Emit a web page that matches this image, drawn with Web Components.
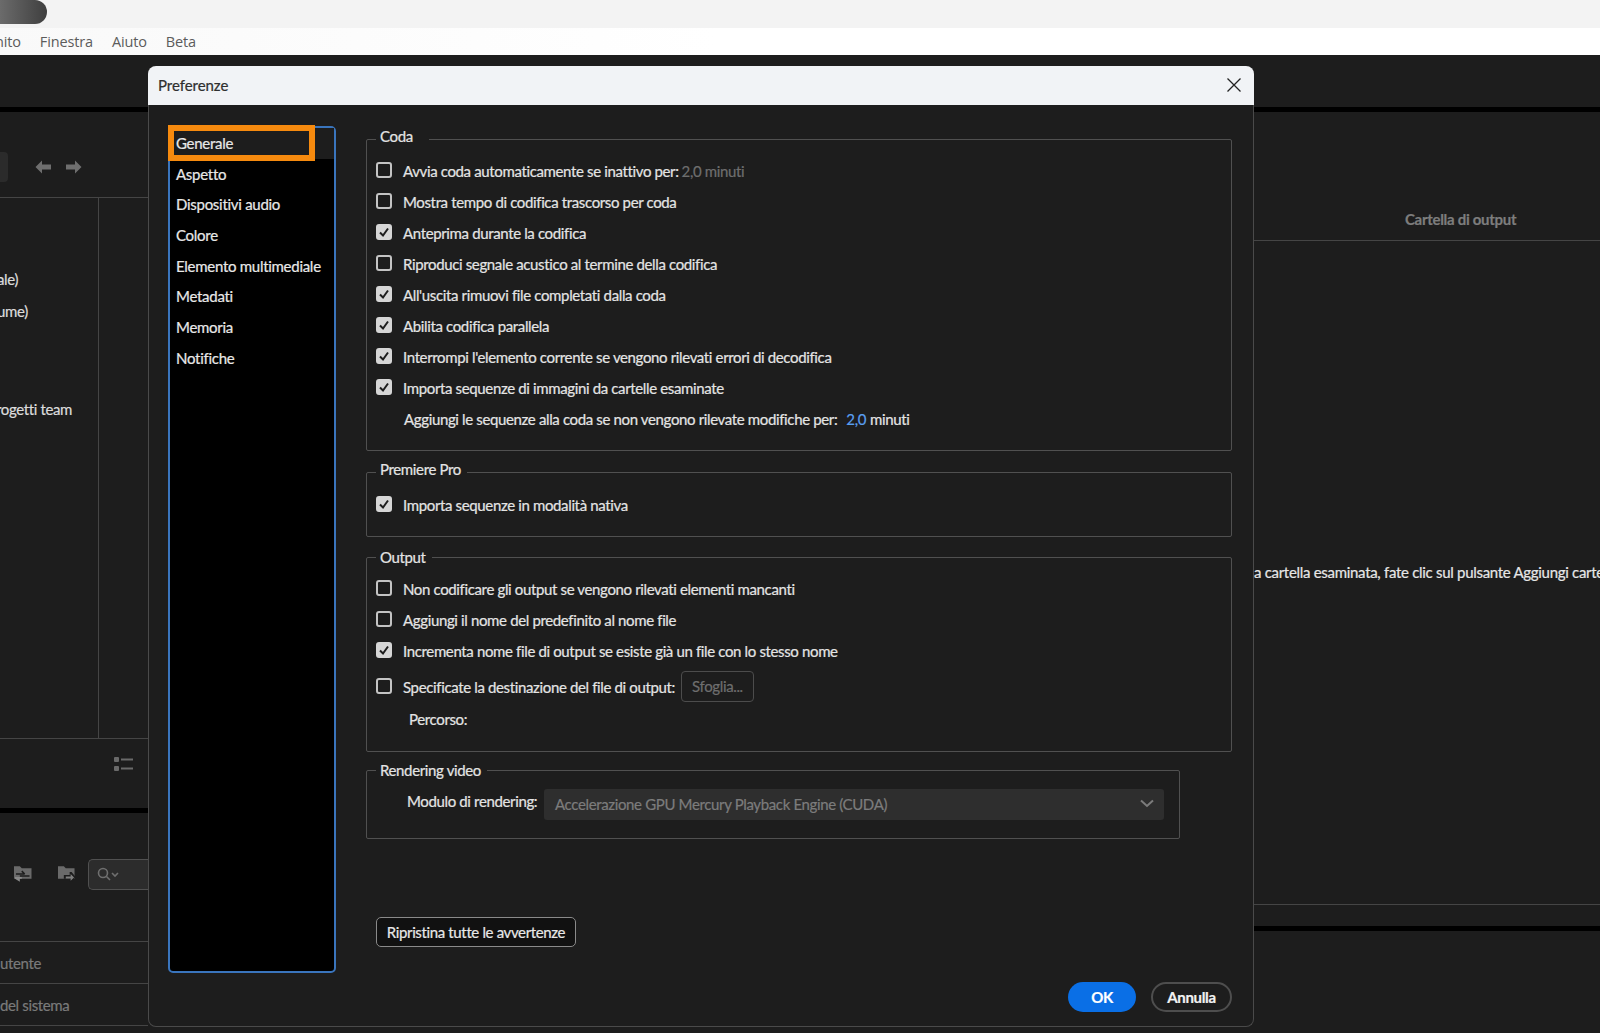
<!doctype html>
<html lang="it">
<head>
<meta charset="utf-8">
<title>Preferenze</title>
<style>
  html, body { margin: 0; height: 100%; background: #1d1d1d; overflow: hidden; }
  body { font-family: Lato, "Noto Sans", sans-serif; -webkit-text-stroke: .2px; }
</style>
</head>
<body>
<app-shell>
  <left-panel slot="left"></left-panel>
  <right-panel slot="right"></right-panel>
</app-shell>

<pref-dialog heading="Preferenze">
  <pref-nav slot="nav">
    <nav-item selected>Generale</nav-item>
    <nav-item>Aspetto</nav-item>
    <nav-item>Dispositivi audio</nav-item>
    <nav-item>Colore</nav-item>
    <nav-item>Elemento multimediale</nav-item>
    <nav-item>Metadati</nav-item>
    <nav-item>Memoria</nav-item>
    <nav-item>Notifiche</nav-item>
  </pref-nav>

  <group-box legend="Coda" style="--legend-gap: 16px; --legend-shift: -3px; --pad-bottom: 16px">
    <check-row>Avvia coda automaticamente se inattivo per:<span style="color:#6e6e6e; margin-left:3px">2,0 minuti</span></check-row>
    <check-row>Mostra tempo di codifica trascorso per coda</check-row>
    <check-row checked>Anteprima durante la codifica</check-row>
    <check-row>Riproduci segnale acustico al termine della codifica</check-row>
    <check-row checked>All'uscita rimuovi file completati dalla coda</check-row>
    <check-row checked>Abilita codifica parallela</check-row>
    <check-row checked>Interrompi l'elemento corrente se vengono rilevati errori di decodifica</check-row>
    <check-row checked>Importa sequenze di immagini da cartelle esaminate</check-row>
    <plain-row indent="37">Aggiungi le sequenze alla coda se non vengono rilevate modifiche per:<span style="color:#5a9ff0; margin:0 4px 0 9px">2,0</span>minuti</plain-row>
  </group-box>

  <group-box legend="Premiere Pro" style="--legend-gap: 6px; --legend-shift: -3px; margin-top: 11px; --pad-top: 7px; --pad-bottom: 16px">
    <check-row checked>Importa sequenze in modalità nativa</check-row>
  </group-box>

  <group-box legend="Output" style="--legend-gap: 6px; margin-top: 10px; --pad-bottom: 17px">
    <check-row>Non codificare gli output se vengono rilevati elementi mancanti</check-row>
    <check-row>Aggiungi il nome del predefinito al nome file</check-row>
    <check-row checked>Incrementa nome file di output se esiste già un file con lo stesso nome</check-row>
    <check-row tall>Specificate la destinazione del file di output:<dlg-button disabled style="margin-left:6px">Sfoglia...</dlg-button></check-row>
    <plain-row indent="42" style="height:27px; padding-bottom:2px">Percorso:</plain-row>
  </group-box>

  <group-box legend="Rendering video" style="--legend-gap: 6px; margin-top: 8px; width: 814px; --pad-top: 9px; --pad-bottom: 18px">
    <select-row label="Modulo di rendering:" value="Accelerazione GPU Mercury Playback Engine (CUDA)"></select-row>
  </group-box>

  <dlg-button slot="reset" dark>Ripristina tutte le avvertenze</dlg-button>

  <dlg-button slot="ok" primary>OK</dlg-button>
  <dlg-button slot="cancel" pill>Annulla</dlg-button>
</pref-dialog>

<script>
class AppShell extends HTMLElement {
  constructor() {
    super();
    this.attachShadow({ mode: "open" });
    this.shadowRoot.innerHTML = `
      <style>
        :host { display: flex; flex-direction: column; height: 1033px; overflow: hidden; }
        .title { flex: 0 0 28px; background: #f3f3f3; overflow: hidden; }
        .pill { width: 47px; height: 24px; border-radius: 0 12px 12px 0;
                background: linear-gradient(90deg, #6b6b6b, #3f3f3f); }
        .menu { flex: 0 0 27px; box-sizing: border-box; background: linear-gradient(90deg, #f9f9f9, #ffffff 45%);
                display: flex; align-items: center; gap: 19px; margin-left: -5px; padding-bottom: 1px;
                font: 14.5px "Open Sans", sans-serif; color: #5c5c5c; letter-spacing: -.15px; -webkit-text-stroke: 0; }
        .work { flex: 1; display: grid; grid-template-columns: 148px 1106px 1fr; min-height: 0; }
        .mid { background: #1d1d1d; }
      </style>
      <div class="title"><div class="pill"></div></div>
      <div class="menu"><span>nito</span><span>Finestra</span><span>Aiuto</span><span>Beta</span></div>
      <div class="work"><slot name="left"></slot><div class="mid"></div><slot name="right"></slot></div>
    `;
  }
}

class LeftPanel extends HTMLElement {
  constructor() {
    super();
    this.attachShadow({ mode: "open" });
    this.shadowRoot.innerHTML = `
      <style>
        :host { display: flex; flex-direction: column; height: 978px; overflow: hidden;
                background: #1d1d1d; color: #7a7a7a; font-size: 15px; letter-spacing: -.36px; }
        .strip { flex: 0 0 52px; }
        .band { flex: 0 0 5px; background: #000; }
        .tools { flex: 0 0 85px; display: flex; align-items: center; gap: 15px; padding-top: 25px; box-sizing: border-box; }
        .stub { width: 8px; height: 30px; background: #2b2b2b; border-radius: 0 4px 4px 0; margin-right: 12px; }
        .tree { flex: 0 0 540px; border-top: 1px solid #454545; display: grid; grid-template-columns: 99px 1fr; }
        .names { border-right: 1px solid #454545; color: #dcdcdc; overflow: hidden; white-space: nowrap; padding-top: 65px; }
        .names div { line-height: 32px; margin-left: -3px; }
        .names .team { margin: 66px 0 0 -4px; }
        .actions { flex: 0 0 70px; border-top: 1px solid #454545; box-sizing: border-box; display: flex;
                   justify-content: flex-end; padding: 18px 15px 0 0; }
        .finder { flex: 0 0 128px; display: flex; align-items: center; gap: 26px; padding: 0 0 6px 14px; box-sizing: border-box; }
        .search { width: 60px; height: 31px; flex: none; box-sizing: border-box; margin-left: -13px; border: 1px solid #505050;
                  border-right: 0; border-radius: 5px 0 0 5px; background: #2c2c2c; display: flex; align-items: center; padding-left: 8px; }
        .foot { flex: 0 0 42px; border-top: 1px solid #454545; box-sizing: border-box; display: flex; align-items: center;
                padding-top: 1px; white-space: nowrap; }
      </style>
      <div class="strip"></div>
      <div class="band"></div>
      <div class="tools">
        <div class="stub"></div>
        <svg width="16" height="14" viewBox="0 0 16 14" fill="#6e6e6e"><path d="M7 0.5 0.5 7 7 13.5V9.5H16V4.5H7Z"/></svg>
        <svg width="16" height="14" viewBox="0 0 16 14" fill="#6e6e6e"><path d="M9 0.5 15.5 7 9 13.5V9.5H0V4.5H9Z"/></svg>
      </div>
      <div class="tree">
        <div class="names">
          <div>ale)</div>
          <div>ume)</div>
          <div class="team">rogetti team</div>
        </div>
        <div></div>
      </div>
      <div class="actions">
        <svg width="19" height="15" viewBox="0 0 19 15" fill="#6a6a6a"><rect x="0" y="0" width="5" height="5" rx="1"/><rect x="0" y="9" width="5" height="5" rx="1"/><rect x="7" y="1.5" width="12" height="2"/><rect x="7" y="10.5" width="12" height="2"/></svg>
      </div>
      <div class="band"></div>
      <div class="finder">
        <svg width="18" height="16" viewBox="0 0 18 16"><path fill="#6a6a6a" d="M0 0H6L8 2H18V13H0Z"/><path fill="none" stroke="#1d1d1d" stroke-width="1.6" d="M2 8H11M8 5 11 8M16 10H6"/><path fill="#8a8a8a" d="M1 11H8V13H6V16L1 13Z"/></svg>
        <svg width="18" height="16" viewBox="0 0 18 16"><path fill="#6a6a6a" d="M0 0H6L8 2H17V13H0Z"/><path fill="#1d1d1d" d="M6 9H12V6H14L18 11 14 16H12V13H6Z"/><path fill="#7f7f7f" d="M8 10.5H13V8L16.5 11.5 13 15V12.5H8Z"/></svg>
        <div class="search">
          <svg width="22" height="14" viewBox="0 0 22 14" fill="none" stroke="#6f6f6f" stroke-width="1.6"><circle cx="6" cy="6" r="4.5"/><path d="M9.5 9.5 13 13"/><path d="M15 6 18 9 21 6"/></svg>
        </div>
      </div>
      <div class="foot">utente</div>
      <div class="foot">del sistema</div>
      <div class="foot"></div>
    `;
  }
}

class RightPanel extends HTMLElement {
  constructor() {
    super();
    this.attachShadow({ mode: "open" });
    this.shadowRoot.innerHTML = `
      <style>
        :host { display: flex; flex-direction: column; height: 978px; overflow: hidden; background: #1d1d1d;
                font-size: 15px; letter-spacing: -.3px; }
        .strip { flex: 0 0 52px; }
        .band { flex: 0 0 5px; background: #000; }
        .head { flex: 0 0 129px; box-sizing: border-box; border-bottom: 1px solid #454545; color: #7d7d7d; font-weight: 700;
                display: flex; align-items: flex-end; padding: 0 0 12px 151px; }
        .msg { flex: 0 0 664px; box-sizing: border-box; border-bottom: 1px solid #454545; color: #e6e6e6; white-space: nowrap;
               padding: 322px 0 0 0; }
        .gap { flex: 0 0 21px; }
      </style>
      <div class="strip"></div>
      <div class="band"></div>
      <div class="head">Cartella di output</div>
      <div class="msg">a cartella esaminata, fate clic sul pulsante Aggiungi cartella</div>
      <div class="gap"></div>
      <div class="band"></div>
    `;
  }
}

class PrefDialog extends HTMLElement {
  constructor() {
    super();
    this.attachShadow({ mode: "open" });
    this.shadowRoot.innerHTML = `
      <style>
        :host { display: flex; flex-direction: column; position: absolute; left: 148px; top: 66px; width: 1106px; height: 961px;
                box-sizing: border-box; border: 1px solid #4a4a4a; border-top: 0; border-radius: 8px; background: #1d1d1d;
                font-size: 15px; letter-spacing: -.36px; color: #e4e4e4; }
        header { flex: 0 0 39px; box-sizing: border-box; margin: 0 -1px; background: #f1f3f6; border-radius: 8px 8px 0 0;
                 display: flex; align-items: center; justify-content: space-between; padding: 0 13px 1px 10px; color: #2f2f2f;
                 letter-spacing: -.05px; }
        header svg { display: block; }
        .main { flex: 1; display: grid; grid-template-columns: 168px 1fr; column-gap: 30px; padding: 21px 21px 0 19px; min-height: 0; }
        .content { padding-top: 3px; }
        .reset { margin: 78px 0 0 10px; }
        .foot { display: flex; justify-content: flex-end; gap: 15px; margin: 35px 0 0 0; }
      </style>
      <header>
        <span id="title"></span>
        <svg width="14" height="14" viewBox="0 0 14 14" fill="none" stroke="#222" stroke-width="1.3"><path d="M.5.5 13.5 13.5M13.5.5.5 13.5"/></svg>
      </header>
      <div class="main">
        <slot name="nav"></slot>
        <div class="content">
          <slot></slot>
          <div class="reset"><slot name="reset"></slot></div>
          <div class="foot"><slot name="ok"></slot><slot name="cancel"></slot></div>
        </div>
      </div>
    `;
  }

  connectedCallback() {
    this.shadowRoot.getElementById("title").textContent = this.getAttribute("heading");
  }
}

class PrefNav extends HTMLElement {
  constructor() {
    super();
    this.attachShadow({ mode: "open" });
    this.shadowRoot.innerHTML = `
      <style>
        :host { display: block; position: relative; height: 847px; box-sizing: border-box; background: #000;
                border: 2px solid #3a75bd; border-radius: 5px; letter-spacing: -.28px; }
        .mark { position: absolute; left: -2px; top: -3px; width: 147px; height: 36px; box-sizing: border-box;
                border: 6px solid #f68a0e; pointer-events: none; }
      </style>
      <slot></slot>
      <div class="mark"></div>
    `;
  }
}

class NavItem extends HTMLElement {
  constructor() {
    super();
    this.attachShadow({ mode: "open" });
    this.shadowRoot.innerHTML = `
      <style>
        :host { display: block; height: 30.7px; line-height: 30px; padding-left: 6px; color: #e8e8e8; white-space: nowrap; }
        :host([selected]) { background: #1d1d1d; }
      </style>
      <slot></slot>
    `;
  }
}

class GroupBox extends HTMLElement {
  constructor() {
    super();
    this.attachShadow({ mode: "open" });
    this.shadowRoot.innerHTML = `
      <style>
        :host { display: block; width: 866px; }
        fieldset { margin: 0; padding: var(--pad-top, 6px) 0 var(--pad-bottom, 15px) 0; border: 1px solid #505050; border-radius: 2px; min-width: 0; }
        legend { margin-left: 9px; padding: 0 var(--legend-gap, 6px) 0 4px; line-height: 20px; color: #e4e4e4; }
        legend span { display: block; transform: translateY(var(--legend-shift, 0)); }
      </style>
      <fieldset>
        <legend><span></span></legend>
        <slot></slot>
      </fieldset>
    `;
  }

  connectedCallback() {
    this.shadowRoot.querySelector("legend span").textContent = this.getAttribute("legend");
  }
}

class CheckRow extends HTMLElement {
  constructor() {
    super();
    this.attachShadow({ mode: "open" });
    this.shadowRoot.innerHTML = `
      <style>
        :host { display: flex; align-items: center; box-sizing: border-box; height: 31px; padding-left: 9px; white-space: nowrap; }
        :host([tall]) { height: 39px; padding-top: 2px; }
        .box { flex: none; width: 16px; height: 16px; box-sizing: border-box; border: 2px solid #c4c4c4; border-radius: 3px;
               margin-right: 11px; margin-top: -1px; display: flex; align-items: center; justify-content: center; }
        :host([checked]) .box { background: #d6d6d6; border-color: #d6d6d6; }
        svg { display: none; }
        :host([checked]) svg { display: block; }
      </style>
      <span class="box"><svg width="12" height="12" viewBox="0 0 12 12" fill="none" stroke="#1d1d1d" stroke-width="2"><path d="M2 6.5 5 9.5 10 2.5"/></svg></span>
      <slot></slot>
    `;
  }
}

class PlainRow extends HTMLElement {
  constructor() {
    super();
    this.attachShadow({ mode: "open" });
    this.shadowRoot.innerHTML = `
      <style>
        :host { display: flex; align-items: center; height: 31px; white-space: nowrap; }
      </style>
      <slot></slot>
    `;
  }

  connectedCallback() {
    this.style.paddingLeft = this.getAttribute("indent") + "px";
  }
}

class SelectRow extends HTMLElement {
  constructor() {
    super();
    this.attachShadow({ mode: "open" });
    this.shadowRoot.innerHTML = `
      <style>
        :host { display: flex; align-items: flex-start; padding-left: 40px; white-space: nowrap; }
        .label { width: 137px; line-height: 24px; }
        .field { width: 620px; height: 31px; box-sizing: border-box; background: #2e2e2e; border-radius: 3px; color: #7c7c7c;
                 display: flex; align-items: center; justify-content: space-between; padding: 0 10px 2px 11px; }
      </style>
      <span class="label"></span>
      <div class="field">
        <span class="value"></span>
        <svg width="14" height="9" viewBox="0 0 14 9" fill="none" stroke="#7c7c7c" stroke-width="2"><path d="M1 1.5 7 7 13 1.5"/></svg>
      </div>
    `;
  }

  connectedCallback() {
    this.shadowRoot.querySelector(".label").textContent = this.getAttribute("label");
    this.shadowRoot.querySelector(".value").textContent = this.getAttribute("value");
  }
}

class DlgButton extends HTMLElement {
  constructor() {
    super();
    this.attachShadow({ mode: "open" });
    this.shadowRoot.innerHTML = `
      <style>
        :host { display: inline-flex; align-items: center; justify-content: center; box-sizing: border-box; height: 30px; white-space: nowrap; }
        :host([disabled]) { width: 73px; border: 1px solid #4c4c4c; border-radius: 4px; color: #6e6e6e; height: 31px; padding-bottom: 2px; }
        :host([dark]) { width: 200px; background: #111; border: 1px solid #8a8a8a; border-radius: 5px; color: #e8e8e8; }
        :host([primary]) { width: 68px; background: #0a6fe6; border-radius: 15px; color: #fff; font-weight: 700; }
        :host([pill]) { width: 81px; border: 2px solid #4e4e4e; border-radius: 15px; color: #f2f2f2; font-weight: 700; }
      </style>
      <slot></slot>
    `;
  }
}

customElements.define("app-shell", AppShell);
customElements.define("left-panel", LeftPanel);
customElements.define("right-panel", RightPanel);
customElements.define("pref-dialog", PrefDialog);
customElements.define("pref-nav", PrefNav);
customElements.define("nav-item", NavItem);
customElements.define("group-box", GroupBox);
customElements.define("check-row", CheckRow);
customElements.define("plain-row", PlainRow);
customElements.define("select-row", SelectRow);
customElements.define("dlg-button", DlgButton);
</script>
</body>
</html>
